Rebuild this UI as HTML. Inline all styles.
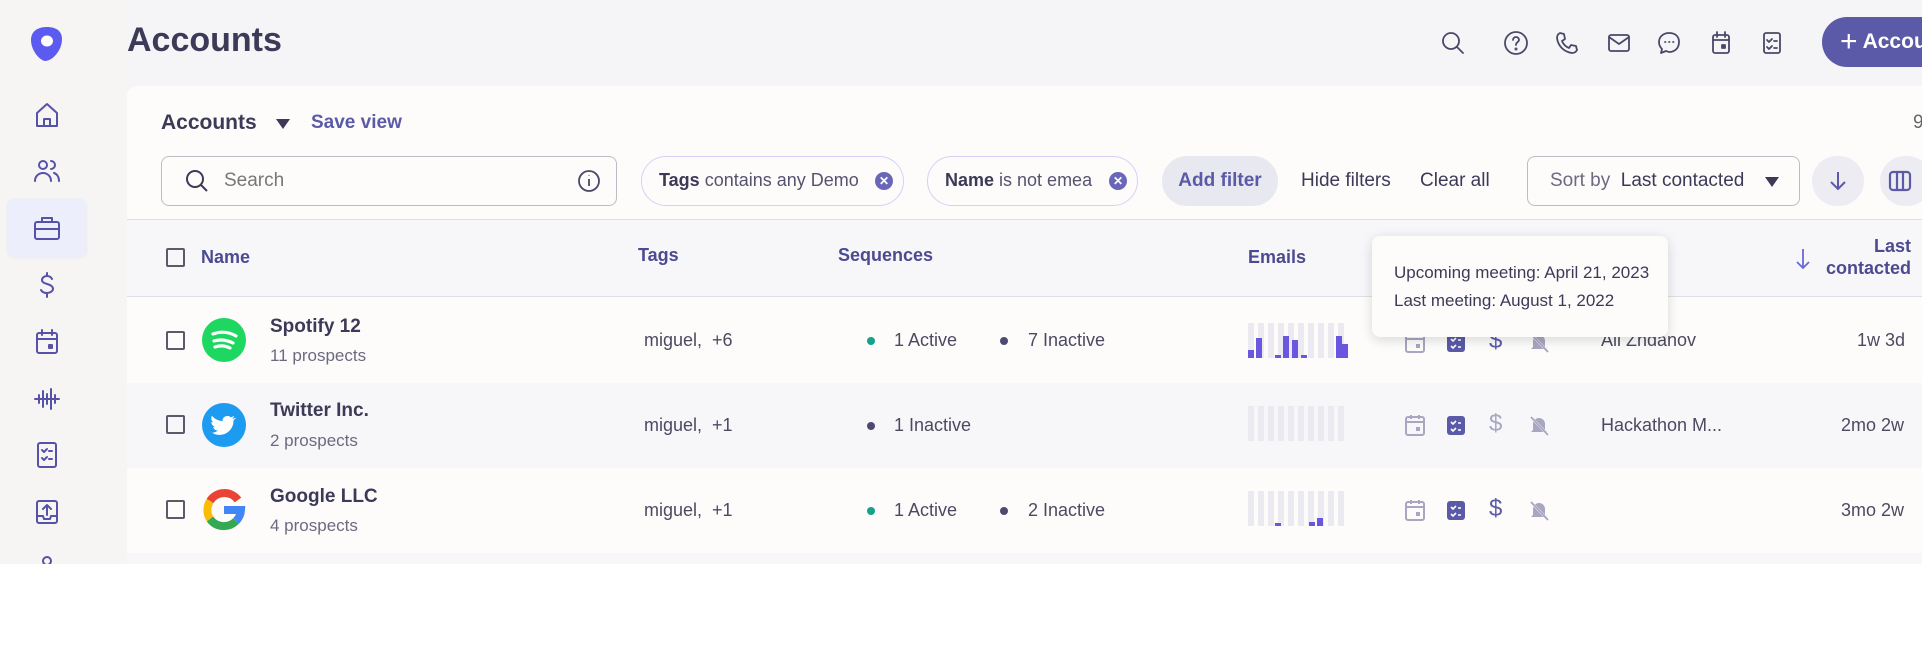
<!DOCTYPE html>
<html><head><meta charset="utf-8"><style>
*{margin:0;padding:0;box-sizing:border-box}
body{width:1922px;height:668px;background:#fff;font-family:"Liberation Sans",sans-serif;position:relative;overflow:hidden;color:#3c3a57}
.a{position:absolute}
#app{position:absolute;left:0;top:0;width:1922px;height:564px;background:#f5f5f7;overflow:hidden}
#side{position:absolute;left:0;top:0;width:127px;height:564px;background:#f6f5f4}
.si{position:absolute;left:30px;width:34px;height:34px}
.si svg{width:34px;height:34px;fill:none;stroke:#5652a8;stroke-width:2;stroke-linecap:round;stroke-linejoin:round}
.ti svg{width:28px;height:28px;fill:none;stroke:#4a4868;stroke-width:1.8;stroke-linecap:round;stroke-linejoin:round}
.ti{position:absolute;top:29px}
#card{position:absolute;left:127px;top:86px;width:1800px;height:478px;background:#fdfcfb;border-radius:10px 0 0 0}
.t{position:absolute;white-space:nowrap}
.chip{position:absolute;top:156px;height:50px;border:1.5px solid #d4d2f5;border-radius:25px;font-size:18px;line-height:47px;color:#55536e;padding-left:17px;white-space:nowrap}
.x{position:absolute;right:10px;top:15px;width:18px;height:18px;border-radius:50%;background:#6a67b8;color:#fff;font-size:12px;line-height:18px;text-align:center;font-weight:bold}
.row{position:absolute;left:127px;width:1800px}
.cb{position:absolute;left:166px;width:19px;height:19px;border:2px solid #5a5a6a;border-radius:2px}
.nm{position:absolute;left:270px;font-size:19px;color:#3c3a57;font-weight:bold}
.sub{position:absolute;left:270px;font-size:17px;color:#6c6a80}
.tx{position:absolute;font-size:18px;color:#4c4a60;white-space:nowrap}
.dot{position:absolute;width:8px;height:8px;border-radius:50%}
.bars{position:absolute;left:1248px;width:100px;height:35px}
.bars i{position:absolute;top:0;width:6px;height:35px;background:#eceaf1}
.bars b{position:absolute;bottom:0;width:6px;background:#6a57e0}
.ic{position:absolute;width:24px;height:24px}
</style></head><body>
<div id="app">
<div id="side">
 <svg class="a" style="left:27px;top:24px" width="40" height="40" viewBox="0 0 40 40"><path d="M20 3C11 3 4 7 4 16c0 10 8 20 14 21 7 0 17-10 17-22C35 7 29 3 20 3z" fill="#5b5bf0"/><ellipse cx="20" cy="17" rx="6" ry="5.5" fill="#fff"/></svg>
 <div class="si" style="top:98px"><svg viewBox="0 0 34 34"><path d="M7 15L17 6l10 9v13H7z"/><path d="M14 28v-7h6v7"/></svg></div>
 <div class="si" style="top:154px"><svg viewBox="0 0 34 34"><circle cx="13" cy="11" r="4"/><path d="M5 27c0-5 4-8 8-8s8 3 8 8"/><path d="M21 7a4 4 0 010 8M24 19c3 1 5 4 5 8"/></svg></div>
 <div class="a" style="left:8px;top:200px;width:78px;height:57px;background:#eceefc;border-radius:6px;box-shadow:0 0 3px rgba(120,120,200,.15)"></div>
 <div class="si" style="top:211px"><svg viewBox="0 0 34 34"><rect x="5" y="11" width="24" height="17" rx="2"/><path d="M12 11V7h10v4M5 18h24"/></svg></div>
 <div class="si" style="top:268px"><svg viewBox="0 0 34 34"><path d="M22 11c-1-2-3-3-5-3-3 0-5 2-5 4 0 5 11 3 11 9 0 2-3 4-6 4-3 0-5-1-6-3M17 5v3M17 25v4"/></svg></div>
 <div class="si" style="top:325px"><svg viewBox="0 0 34 34"><rect x="7" y="8" width="20" height="20" rx="2"/><path d="M7 14h20M12 5v5M22 5v5"/><rect x="19" y="20" width="3" height="3" fill="#5652a8"/></svg></div>
 <div class="si" style="top:382px"><svg viewBox="0 0 34 34"><path d="M5 17h24M9 13v8M13 9v16M17 12v10M21 7v20M25 13v8"/></svg></div>
 <div class="si" style="top:438px"><svg viewBox="0 0 34 34"><rect x="8" y="5" width="18" height="24" rx="2"/><path d="M12 12l2 2 3-3M19 13h3M12 20l2 2 3-3M19 21h3"/></svg></div>
 <div class="si" style="top:495px"><svg viewBox="0 0 34 34"><rect x="7" y="6" width="20" height="22" rx="2"/><path d="M17 20V11M13 14l4-4 4 4M7 21h6l1 3h6l1-3h6"/></svg></div>
 <div class="si" style="top:552px"><svg viewBox="0 0 34 34"><circle cx="17" cy="9" r="4"/></svg></div>
</div>
<div class="t" style="left:127px;top:21px;font-size:34px;font-weight:bold;color:#3c3a57">Accounts</div>
<div class="ti" style="left:1439px"><svg viewBox="0 0 28 28"><circle cx="12" cy="12" r="8"/><path d="M18 18l6 6"/></svg></div>
<div class="ti" style="left:1502px"><svg viewBox="0 0 28 28"><circle cx="14" cy="14" r="11"/><path d="M11 11a3 3 0 116 0c0 2-3 2-3 5"/><circle cx="14" cy="20" r=".6"/></svg></div>
<div class="ti" style="left:1553px"><svg viewBox="0 0 28 28"><path d="M7 4l4 1 1 5-3 2c1 3 4 6 7 7l2-3 5 1 1 4c-1 2-3 3-5 3C11 23 5 17 4 9c0-2 1-4 3-5z"/></svg></div>
<div class="ti" style="left:1605px"><svg viewBox="0 0 28 28"><rect x="4" y="6" width="20" height="16" rx="2"/><path d="M4 8l10 7 10-7"/></svg></div>
<div class="ti" style="left:1655px"><svg viewBox="0 0 28 28"><path d="M14 4C8 4 4 8 4 13c0 3 1 5 3 7l-1 4 5-2c1 0 2 1 3 1 6 0 10-4 10-10S20 4 14 4z"/><path d="M10 13h.5M14 13h.5M18 13h.5"/></svg></div>
<div class="ti" style="left:1707px"><svg viewBox="0 0 28 28"><rect x="6" y="6" width="16" height="18" rx="2"/><path d="M6 11h16M10 3v5M18 3v5"/><rect x="15" y="16" width="3" height="3" fill="#4a4868"/></svg></div>
<div class="ti" style="left:1758px"><svg viewBox="0 0 28 28"><rect x="6" y="4" width="16" height="20" rx="2"/><path d="M9 11l2 2 3-3M16 12h3M9 18l2 2 3-3M16 19h3"/></svg></div>
<div class="a" style="left:1822px;top:17px;width:160px;height:50px;background:#5b5aa8;border-radius:25px;color:#fff;font-size:21px;line-height:50px;padding-left:18px;font-weight:bold;white-space:nowrap"><span style="font-size:30px;font-weight:normal;vertical-align:-3px">+</span> Accounts</div>

<div id="card"></div>
<div class="t" style="left:161px;top:111px;font-size:21px;font-weight:bold">Accounts</div>
<svg class="a" style="left:275px;top:118px" width="16" height="12" viewBox="0 0 16 12"><path d="M1 1h14L8 11z" fill="#3c3a57"/></svg>
<div class="t" style="left:311px;top:112px;font-size:19px;color:#5b5aa8;font-weight:bold">Save view</div>
<div class="t" style="left:1913px;top:112px;font-size:19px;color:#666">9</div>
<div class="a" style="left:161px;top:156px;width:456px;height:50px;border:1.5px solid #bdbcc4;border-radius:8px"></div>
<svg class="a" style="left:184px;top:168px" width="26" height="26" viewBox="0 0 26 26" fill="none" stroke="#3c3a57" stroke-width="2"><circle cx="11" cy="11" r="8"/><path d="M17 17l6 6"/></svg>
<div class="t" style="left:224px;top:170px;font-size:19px;color:#777">Search</div>
<svg class="a" style="left:577px;top:169px" width="24" height="24" viewBox="0 0 24 24" fill="none" stroke="#4a4868" stroke-width="1.8"><circle cx="12" cy="12" r="10"/><path d="M12 10v7M12 6.5v.5"/></svg>
<div class="chip" style="left:641px;width:263px"><b style="color:#3c3a57">Tags</b> contains any Demo<span class="x">✕</span></div>
<div class="chip" style="left:927px;width:211px"><b style="color:#3c3a57">Name</b> is not emea<span class="x">✕</span></div>
<div class="a" style="left:1162px;top:156px;width:116px;height:50px;border-radius:25px;background:#e8e8f0;color:#5b5aa8;font-size:19px;font-weight:bold;line-height:50px;text-align:center">Add filter</div>
<div class="t" style="left:1301px;top:170px;font-size:19px;color:#3c3a57">Hide filters</div>
<div class="t" style="left:1420px;top:170px;font-size:19px;color:#3c3a57">Clear all</div>
<div class="a" style="left:1527px;top:156px;width:273px;height:50px;border:1.5px solid #bdbcc4;border-radius:8px;font-size:19px;line-height:47px;padding-left:22px;color:#6c6a80;white-space:nowrap">Sort by &nbsp;<span style="color:#3c3a57">Last contacted</span></div>
<svg class="a" style="left:1764px;top:176px" width="16" height="12" viewBox="0 0 16 12"><path d="M1 1h14L8 11z" fill="#3c3a57"/></svg>
<div class="a" style="left:1812px;top:156px;width:52px;height:50px;border-radius:25px;background:#ececf2"></div>
<svg class="a" style="left:1826px;top:169px" width="24" height="24" viewBox="0 0 24 24" fill="none" stroke="#5b5aa8" stroke-width="2"><path d="M12 3v17M5 13l7 7 7-7"/></svg>
<div class="a" style="left:1880px;top:156px;width:52px;height:50px;border-radius:25px;background:#ececf2"></div>
<svg class="a" style="left:1888px;top:170px" width="24" height="22" viewBox="0 0 24 22" fill="none" stroke="#5b5aa8" stroke-width="2.2"><rect x="2" y="2" width="20" height="18" rx="3"/><path d="M9 2v18M15 2v18"/></svg>

<div class="a" style="left:127px;top:219px;width:1800px;height:78px;background:#f7f7fa;border-top:1.5px solid #e0dfe5;border-bottom:1.5px solid #e0dfe5"></div>
<div class="cb" style="top:248px"></div>
<div class="t" style="left:201px;top:247px;font-size:18px;font-weight:bold;color:#4c4a90">Name</div>
<div class="t" style="left:638px;top:245px;font-size:18px;font-weight:bold;color:#4c4a90">Tags</div>
<div class="t" style="left:838px;top:245px;font-size:18px;font-weight:bold;color:#4c4a90">Sequences</div>
<div class="t" style="left:1248px;top:247px;font-size:18px;font-weight:bold;color:#4c4a90">Emails</div>
<svg class="a" style="left:1793px;top:247px" width="20" height="24" viewBox="0 0 20 24" fill="none" stroke="#6a67d8" stroke-width="1.8"><path d="M10 2v19M4 15l6 6 6-6"/></svg>
<div class="t" style="left:1820px;top:235px;font-size:18px;font-weight:bold;color:#4c4a90;text-align:right;width:91px;line-height:22px">Last<br>contacted</div>

<div class="row" style="top:297px;height:86px;background:#fdfcfb"></div>
<div class="row" style="top:383px;height:85px;background:#f7f7fa"></div>
<div class="row" style="top:468px;height:85px;background:#fdfcfb"></div>
<div class="row" style="top:553px;height:11px;background:#f7f7fa"></div>

<div class="cb" style="top:331px"></div>
<svg class="a" style="left:202px;top:318px" width="44" height="44" viewBox="0 0 44 44"><circle cx="22" cy="22" r="22" fill="#1ed760"/><path d="M11 16c8-3 16-2 23 2M12 23c7-2 13-1 19 2M13 29c6-2 11-1 15 1" stroke="#fff" stroke-width="3.2" fill="none" stroke-linecap="round"/></svg>
<div class="nm" style="top:316px">Spotify 12</div><div class="sub" style="top:346px">11 prospects</div>
<div class="tx" style="left:644px;top:330px">miguel, &nbsp;+6</div>
<div class="dot" style="left:867px;top:337px;background:#12a38a"></div><div class="tx" style="left:894px;top:330px">1 Active</div>
<div class="dot" style="left:1000px;top:337px;background:#4c4a70"></div><div class="tx" style="left:1028px;top:330px">7 Inactive</div>
<div class="bars" style="top:323px"><i style="left:0"></i><i style="left:10px"></i><i style="left:20px"></i><i style="left:30px"></i><i style="left:40px"></i><i style="left:50px"></i><i style="left:60px"></i><i style="left:70px"></i><i style="left:80px"></i><i style="left:90px"></i><b style="left:0;height:8px"></b><b style="left:8px;height:20px"></b><b style="left:27px;height:3px"></b><b style="left:35px;height:22px"></b><b style="left:44px;height:18px"></b><b style="left:53px;height:3px"></b><b style="left:88px;height:22px"></b><b style="left:94px;height:14px"></b></div>
<div class="tx" style="left:1601px;top:330px">Ali Zhdanov</div>
<div class="tx" style="left:1857px;top:330px">1w 3d</div>

<div class="cb" style="top:415px"></div>
<svg class="a" style="left:202px;top:403px" width="44" height="44" viewBox="0 0 44 44"><circle cx="22" cy="22" r="22" fill="#1d9bf0"/><path d="M33 15c-1 .5-2 .8-3 .9 1-.7 2-1.7 2-2.9-1 .6-2 1-3.2 1.2A5 5 0 0020.5 18c-4.2-.2-8-2.2-10.5-5.3-1.4 2.4-.6 5.3 1.6 6.8-.8 0-1.6-.3-2.3-.6 0 2.5 1.8 4.6 4.1 5.1-.8.2-1.600.2-2.300.1.7 2 2.6 3.5 4.8 3.5A10 10 0 0110 29.7 14 14 0 0031.5 17.3c1-.7 1.8-1.5 2.5-2.4z" fill="#fff"/></svg>
<div class="nm" style="top:400px">Twitter Inc.</div><div class="sub" style="top:431px">2 prospects</div>
<div class="tx" style="left:644px;top:415px">miguel, &nbsp;+1</div>
<div class="dot" style="left:867px;top:422px;background:#4c4a70"></div><div class="tx" style="left:894px;top:415px">1 Inactive</div>
<div class="bars" style="top:406px"><i style="left:0"></i><i style="left:10px"></i><i style="left:20px"></i><i style="left:30px"></i><i style="left:40px"></i><i style="left:50px"></i><i style="left:60px"></i><i style="left:70px"></i><i style="left:80px"></i><i style="left:90px"></i></div>
<div class="tx" style="left:1601px;top:415px">Hackathon M...</div>
<div class="tx" style="left:1841px;top:415px">2mo 2w</div>

<div class="cb" style="top:500px"></div>
<svg class="a" style="left:202px;top:488px" width="44" height="44" viewBox="0 0 44 44" fill="none" stroke-width="8"><path d="M36 12A17 17 0 0022 5" stroke="#ea4335"/><path d="M22 5A17 17 0 008 13" stroke="#ea4335"/><path d="M8 13a17 17 0 000 18" stroke="#fbbc05"/><path d="M8 31a17 17 0 0026 2" stroke="#34a853"/><path d="M34 33a17 17 0 005-11H22" stroke="#4285f4"/></svg>
<div class="nm" style="top:486px">Google LLC</div><div class="sub" style="top:516px">4 prospects</div>
<div class="tx" style="left:644px;top:500px">miguel, &nbsp;+1</div>
<div class="dot" style="left:867px;top:507px;background:#12a38a"></div><div class="tx" style="left:894px;top:500px">1 Active</div>
<div class="dot" style="left:1000px;top:507px;background:#4c4a70"></div><div class="tx" style="left:1028px;top:500px">2 Inactive</div>
<div class="bars" style="top:491px"><i style="left:0"></i><i style="left:10px"></i><i style="left:20px"></i><i style="left:30px"></i><i style="left:40px"></i><i style="left:50px"></i><i style="left:60px"></i><i style="left:70px"></i><i style="left:80px"></i><i style="left:90px"></i><b style="left:27px;height:3px"></b><b style="left:61px;height:4px"></b><b style="left:69px;height:8px"></b></div>
<div class="tx" style="left:1841px;top:500px">3mo 2w</div>

<svg width="0" height="0" style="position:absolute"><defs>
<g id="cal"><rect x="3" y="4" width="18" height="18" rx="2" fill="none" stroke="#a8a6c0" stroke-width="2"/><path d="M3 9h18M8 2v4M16 2v4" stroke="#a8a6c0" stroke-width="2"/><rect x="13" y="14" width="4" height="4" fill="#a8a6c0"/></g>
<g id="tsk"><rect x="3" y="3" width="18" height="19" rx="3" fill="#5b5aa8"/><path d="M7 9l2 2 3-3M14 10h3M7 16l2 2 3-3M14 17h3" stroke="#fff" stroke-width="1.6" fill="none"/></g>
<g id="bell"><path d="M6 17V11a6 6 0 0112 0v6l2 2H4z" fill="#a8a6c0"/><path d="M3 3l18 19" stroke="#fdfcfb" stroke-width="2.5"/><path d="M4 4l17 18" stroke="#a8a6c0" stroke-width="1.8"/></g>
</defs></svg>
<svg class="ic" style="left:1403px;top:330px" viewBox="0 0 24 24"><use href="#cal"/></svg>
<svg class="ic" style="left:1444px;top:330px" viewBox="0 0 24 24"><use href="#tsk"/></svg>
<div class="tx" style="left:1489px;top:327px;font-size:24px;color:#5b5aa8">$</div>
<svg class="ic" style="left:1527px;top:330px" viewBox="0 0 24 24"><use href="#bell"/></svg>
<svg class="ic" style="left:1403px;top:413px" viewBox="0 0 24 24"><use href="#cal"/></svg>
<svg class="ic" style="left:1444px;top:413px" viewBox="0 0 24 24"><use href="#tsk"/></svg>
<div class="tx" style="left:1489px;top:410px;font-size:24px;color:#a8a6c0">$</div>
<svg class="ic" style="left:1527px;top:413px" viewBox="0 0 24 24"><use href="#bell"/></svg>
<svg class="ic" style="left:1403px;top:498px" viewBox="0 0 24 24"><use href="#cal"/></svg>
<svg class="ic" style="left:1444px;top:498px" viewBox="0 0 24 24"><use href="#tsk"/></svg>
<div class="tx" style="left:1489px;top:495px;font-size:24px;color:#5b5aa8">$</div>
<svg class="ic" style="left:1527px;top:498px" viewBox="0 0 24 24"><use href="#bell"/></svg>

<div class="a" style="left:1372px;top:236px;width:296px;height:101px;background:#fdfcfb;border-radius:8px;box-shadow:0 3px 12px rgba(0,0,0,.15)"></div>
<div class="t" style="left:1394px;top:263px;font-size:17px;color:#3c3a57">Upcoming meeting: April 21, 2023</div>
<div class="t" style="left:1394px;top:291px;font-size:17px;color:#3c3a57">Last meeting: August 1, 2022</div>
</div>
</body></html>
